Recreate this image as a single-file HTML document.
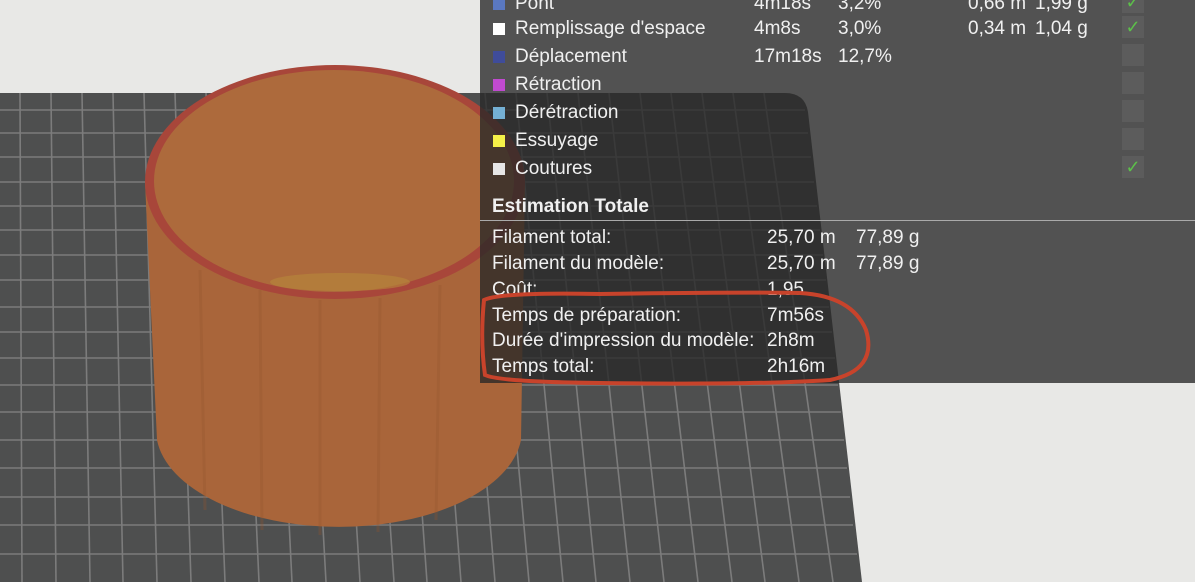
<!DOCTYPE html>
<html><head><meta charset="utf-8"><style>
body{margin:0;width:1195px;height:582px;overflow:hidden;background:#e8e8e6;font-family:"Liberation Sans",sans-serif;position:relative}
svg{position:absolute;left:0;top:0}
#p{position:absolute;left:480px;top:0;width:715px;height:383px;background:rgba(40,40,40,0.78);color:#f0f0f0;font-size:19px}
.r{position:absolute;left:0;height:24px;line-height:24px;white-space:nowrap;margin-top:2px}
.r span{position:absolute}
.sw{position:absolute;left:13px;top:6px;width:12px;height:12px}
.cb{position:absolute;left:642px;top:-1px;width:22px;height:22px;background:#5c5c5c}
.ck{color:#5cbf4a;font-size:18px;line-height:22px;text-align:center}
</style></head><body>
<svg width="1195" height="582">
<path d="M0,93 L785,93 Q805,93 808,112 L862,582 L0,582 Z" fill="#4e4f4f"/>
<g stroke="#7c7c7c" stroke-width="1.6">
<line x1="0" y1="110" x2="805" y2="110"/><line x1="0" y1="133" x2="808" y2="133"/>
<line x1="0" y1="157" x2="811" y2="157"/><line x1="0" y1="182" x2="814" y2="182"/>
<line x1="0" y1="206" x2="817" y2="206"/><line x1="0" y1="230" x2="820" y2="230"/>
<line x1="0" y1="255" x2="823" y2="255"/><line x1="0" y1="280" x2="826" y2="280"/>
<line x1="0" y1="307" x2="829" y2="307"/><line x1="0" y1="332" x2="832" y2="332"/>
<line x1="0" y1="358" x2="835" y2="358"/><line x1="0" y1="385" x2="838" y2="385"/>
<line x1="0" y1="412" x2="841" y2="412"/><line x1="0" y1="440" x2="844" y2="440"/>
<line x1="0" y1="468" x2="847" y2="468"/><line x1="0" y1="497" x2="850" y2="497"/>
<line x1="0" y1="525" x2="853" y2="525"/><line x1="0" y1="554" x2="857" y2="554"/>
</g>
<g stroke="#7c7c7c" stroke-width="1.6">
<line x1="20" y1="93" x2="22" y2="582"/><line x1="51" y1="93" x2="56" y2="582"/>
<line x1="82" y1="93" x2="90" y2="582"/><line x1="113" y1="93" x2="123" y2="582"/>
<line x1="144" y1="93" x2="157" y2="582"/><line x1="175" y1="93" x2="191" y2="582"/>
<line x1="206" y1="93" x2="225" y2="582"/><line x1="237" y1="93" x2="259" y2="582"/>
<line x1="268" y1="93" x2="292" y2="582"/><line x1="299" y1="93" x2="326" y2="582"/>
<line x1="330" y1="93" x2="360" y2="582"/><line x1="361" y1="93" x2="394" y2="582"/>
<line x1="392" y1="93" x2="427" y2="582"/><line x1="423" y1="93" x2="461" y2="582"/>
<line x1="454" y1="93" x2="495" y2="582"/><line x1="485" y1="93" x2="529" y2="582"/>
<line x1="516" y1="93" x2="563" y2="582"/><line x1="547" y1="93" x2="596" y2="582"/>
<line x1="578" y1="93" x2="630" y2="582"/><line x1="609" y1="93" x2="664" y2="582"/>
<line x1="640" y1="93" x2="698" y2="582"/><line x1="671" y1="93" x2="732" y2="582"/>
<line x1="702" y1="93" x2="765" y2="582"/><line x1="733" y1="93" x2="799" y2="582"/>
<line x1="764" y1="93" x2="833" y2="582"/>
</g>
<path d="M145,182 L157,440 A183,97 0 0 0 521,440 L525,182 Z" fill="#a9653a"/>
<g stroke="#95552e" stroke-width="3" opacity="0.3">
<line x1="200" y1="270" x2="205" y2="510"/><line x1="260" y1="290" x2="262" y2="530"/>
<line x1="320" y1="300" x2="320" y2="535"/><line x1="380" y1="298" x2="378" y2="532"/>
<line x1="440" y1="285" x2="436" y2="520"/>
</g>
<ellipse cx="335" cy="182" rx="190" ry="117" fill="#a8463a"/>
<ellipse cx="334" cy="181" rx="180" ry="111" fill="#ad6a3c"/>
<ellipse cx="340" cy="282" rx="70" ry="9" fill="#b8883a" opacity="0.6"/>
</svg>
<div id="p">
<div class="r" style="top:-10px"><div class="sw" style="background:#5a78c0"></div><span style="left:35px">Pont</span><span style="left:274px">4m18s</span><span style="left:358px">3,2%</span><span style="left:488px">0,66 m</span><span style="left:555px">1,99 g</span><div class="cb ck">✓</div></div>
<div class="r" style="top:15px"><div class="sw" style="background:#fff"></div><span style="left:35px">Remplissage d'espace</span><span style="left:274px">4m8s</span><span style="left:358px">3,0%</span><span style="left:488px">0,34 m</span><span style="left:555px">1,04 g</span><div class="cb ck">✓</div></div>
<div class="r" style="top:43px"><div class="sw" style="background:#3f4c9a"></div><span style="left:35px">Déplacement</span><span style="left:274px">17m18s</span><span style="left:358px">12,7%</span><div class="cb"></div></div>
<div class="r" style="top:71px"><div class="sw" style="background:#c04ad0"></div><span style="left:35px">Rétraction</span><div class="cb"></div></div>
<div class="r" style="top:99px"><div class="sw" style="background:#74b0d4"></div><span style="left:35px">Dérétraction</span><div class="cb"></div></div>
<div class="r" style="top:127px"><div class="sw" style="background:#f6f048"></div><span style="left:35px">Essuyage</span><div class="cb"></div></div>
<div class="r" style="top:155px"><div class="sw" style="background:#e6e6e6"></div><span style="left:35px">Coutures</span><div class="cb ck">✓</div></div>
<div class="r" style="top:193px;font-weight:bold"><span style="left:12px">Estimation Totale</span></div>
<div style="position:absolute;left:0;top:220px;width:715px;height:1px;background:#aaa"></div>
<div class="r" style="top:224px"><span style="left:12px">Filament total:</span><span style="left:287px">25,70 m</span><span style="left:376px">77,89 g</span></div>
<div class="r" style="top:250px"><span style="left:12px">Filament du modèle:</span><span style="left:287px">25,70 m</span><span style="left:376px">77,89 g</span></div>
<div class="r" style="top:276px"><span style="left:12px">Coût:</span><span style="left:287px">1,95</span></div>
<div class="r" style="top:302px"><span style="left:12px">Temps de préparation:</span><span style="left:287px">7m56s</span></div>
<div class="r" style="top:327px"><span style="left:12px">Durée d'impression du modèle:</span><span style="left:287px">2h8m</span></div>
<div class="r" style="top:353px"><span style="left:12px">Temps total:</span><span style="left:287px">2h16m</span></div>
</div>
<svg width="1195" height="582" style="pointer-events:none">
<path d="M484,300 Q500,292 600,294 Q740,292 800,293 Q852,296 866,330 Q878,370 830,380 Q760,385 600,383 Q500,382 485,375 Q480,340 484,300 Z" fill="none" stroke="#c8432b" stroke-width="4"/>
</svg>
</body></html>
